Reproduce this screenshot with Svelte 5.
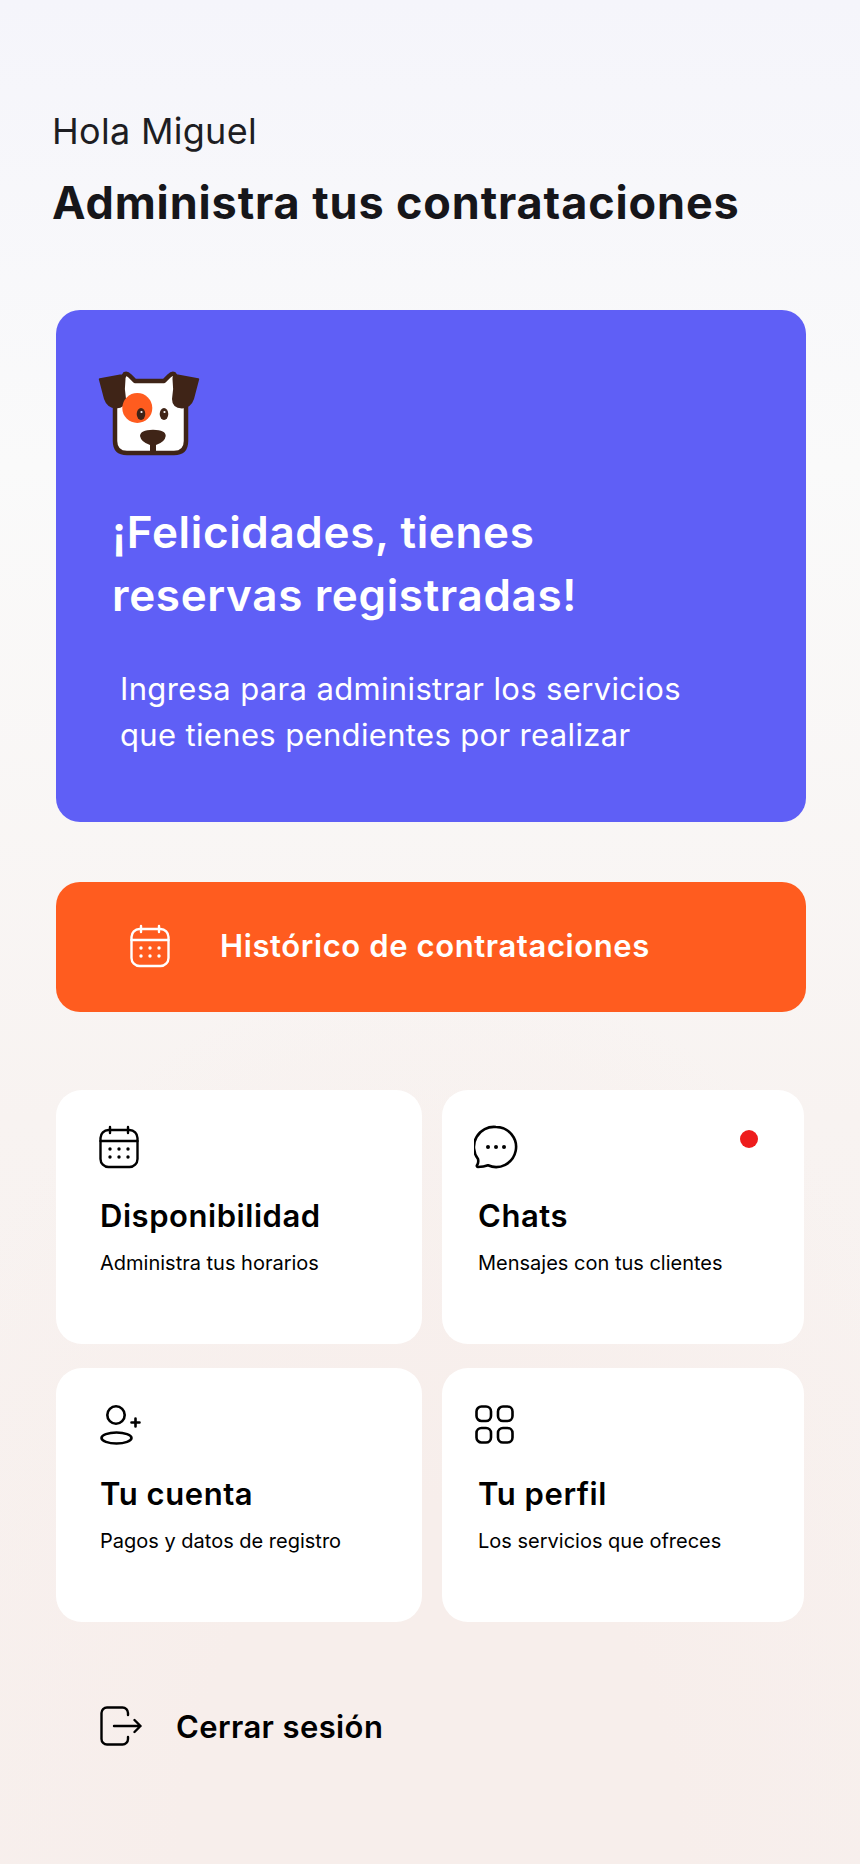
<script>
  const tiles = [
    { title: 'Disponibilidad', text: 'Administra tus horarios', icon: 'calendar' },
    { title: 'Chats', text: 'Mensajes con tus clientes', icon: 'chat', unread: true },
    { title: 'Tu cuenta', text: 'Pagos y datos de registro', icon: 'user' },
    { title: 'Tu perfil', text: 'Los servicios que ofreces', icon: 'grid' }
  ];
</script>

{#snippet calendar()}
  <svg class="calendar" width="40" height="44" viewBox="0 0 40 44" fill="none" stroke="currentColor" stroke-width="2.4" stroke-linecap="round">
    <rect x="1.500" y="5" width="37" height="37" rx="8" />
    <path d="M1.500 16h37M11 2v6M29 2v6" />
    <g fill="currentColor" stroke="none">
      <circle cx="11" cy="24" r="1.700" /><circle cx="20" cy="24" r="1.700" /><circle cx="29" cy="24" r="1.700" />
      <circle cx="11" cy="32" r="1.700" /><circle cx="20" cy="32" r="1.700" /><circle cx="29" cy="32" r="1.700" />
    </g>
  </svg>
{/snippet}

<main class="page">
  <header class="head">
    <p class="hello">Hola Miguel</p>
    <h1>Administra tus contrataciones</h1>
  </header>

  <section class="hero">
    <svg class="dog" width="102" height="85" viewBox="0 0 102 85">
      <path d="M27 3Q29 2 32 5L37 10H66L71 5Q74 2 76 3L88 20V70Q88 82 76 82H29Q17 82 17 70V20Z" fill="#fff" stroke="#3f2417" stroke-width="4.500" stroke-linejoin="round" />
      <path d="M1 9Q0 7 3 7L22 3.500Q28 3 27.500 8Q26 18 28 28Q28 37 18 37.500Q9 37 6 28Z" fill="#3f2417" />
      <path d="M101 9Q102 7 99 7L80 3.500Q74 3 74.500 8Q76 18 74 28Q74 37 84 37.500Q93 37 96 28Z" fill="#3f2417" />
      <circle cx="39.300" cy="37" r="15" fill="#ff5c1f" />
      <ellipse cx="43" cy="43" rx="4.300" ry="6" fill="#3f2417" /><circle cx="43.500" cy="41" r="1.100" fill="#fff" />
      <ellipse cx="66" cy="43" rx="4.300" ry="6" fill="#3f2417" /><circle cx="66.500" cy="41" r="1.100" fill="#fff" />
      <path d="M42 65Q42 59 55 58.700Q68 59 67.700 65Q67 71 58 74V82H52V74Q43 71 42 65Z" fill="#3f2417" />
    </svg>
    <h2>¡Felicidades, tienes<br />reservas registradas!</h2>
    <p>Ingresa para administrar los servicios<br />que tienes pendientes por realizar</p>
  </section>

  <button class="history">
    {@render calendar()}
    <span>Histórico de contrataciones</span>
  </button>

  <section class="tiles">
    {#each tiles as tile}
      <article class="tile">
        <div class="tile-icon">
          {#if tile.icon === 'calendar'}
            {@render calendar()}
          {:else if tile.icon === 'chat'}
            <svg class="shift-chat" width="44" height="44" viewBox="0 0 44 44" fill="none" stroke="currentColor" stroke-width="2.600" stroke-linejoin="round">
              <path d="M22 2a20 20 0 1 1-8 38.300c-3 1.200-7 1.700-10 1.700-1 0-1.500-1-1-1.800 1.500-2 1.500-4 1-6.200A20 20 0 0 1 22 2z" />
              <g fill="currentColor" stroke="none">
                <circle cx="14" cy="22" r="2" /><circle cx="22" cy="22" r="2" /><circle cx="30" cy="22" r="2" />
              </g>
            </svg>
          {:else if tile.icon === 'user'}
            <svg class="shift-user" width="41" height="40" viewBox="0 0 41 40" fill="none" stroke="currentColor" stroke-width="2.600" stroke-linecap="round">
              <circle cx="16" cy="10" r="8.700" />
              <ellipse cx="16.500" cy="33" rx="15" ry="5.500" />
              <path d="M31.500 17.500h8M35.500 13.500v8" />
            </svg>
          {:else}
            <svg class="shift-grid" width="39" height="39" viewBox="0 0 39 39" fill="none" stroke="currentColor" stroke-width="2.600">
              <rect x="1.500" y="1.500" width="14.500" height="14.500" rx="5" />
              <rect x="23" y="1.500" width="14.500" height="14.500" rx="5" />
              <rect x="1.500" y="23" width="14.500" height="14.500" rx="5" />
              <rect x="23" y="23" width="14.500" height="14.500" rx="5" />
            </svg>
          {/if}
          {#if tile.unread}<span class="dot"></span>{/if}
        </div>
        <h3>{tile.title}</h3>
        <p>{tile.text}</p>
      </article>
    {/each}
  </section>

  <button class="logout">
    <svg width="42" height="40" viewBox="0 0 42 40" fill="none" stroke="currentColor" stroke-width="2.400" stroke-linecap="round" stroke-linejoin="round">
      <path d="M28 9V7a5.500 5.500 0 0 0-5.500-5.500H7A5.500 5.500 0 0 0 1.500 7v26A5.500 5.500 0 0 0 7 38.500h15.500A5.500 5.500 0 0 0 28 33v-2" />
      <path d="M14 20h26.500M34.500 14l6 6-6 6" />
    </svg>
    <span>Cerrar sesión</span>
  </button>
</main>

<style>
  :global(body) {
    margin: 0;
  }

  .page {
    box-sizing: border-box;
    width: 860px;
    height: 1864px;
    padding: 109px 54px 0 56px;
    font-family: 'Inter', 'Liberation Sans', sans-serif;
    color: #000;
    background: radial-gradient(ellipse 620px 900px at 50% 100%, #f7eeeb 40%, rgba(247, 238, 235, 0) 100%),
      linear-gradient(180deg, #f5f5fb 0%, #fafafa 25%, #f8f3f1 60%, #f7f0ee 100%);
  }

  .head {
    margin-left: -4px;
  }

  .hello {
    margin: 0;
    font-size: 36px;
    line-height: 44px;
    letter-spacing: 0.3px;
    color: #1d1d22;
  }

  h1 {
    margin: 24px 0 0;
    font-size: 45px;
    line-height: 52px;
    font-weight: 700;
    letter-spacing: 0.87px;
    color: #16161a;
    white-space: nowrap;
  }

  .hero {
    box-sizing: border-box;
    height: 512px;
    margin-top: 81px;
    padding: 61px 43px 0;
    border-radius: 24px;
    background: #5f5ff6;
    color: #fff;
  }

  .dog {
    display: block;
    margin-left: -1px;
  }

  .hero h2 {
    margin: 45px 0 0 13px;
    font-size: 44px;
    line-height: 63px;
    font-weight: 600;
    letter-spacing: 0.65px;
    white-space: nowrap;
  }

  .hero p {
    margin: 39px 0 0 21px;
    font-size: 31px;
    line-height: 46px;
    letter-spacing: 0.35px;
    white-space: nowrap;
  }

  .history {
    display: flex;
    align-items: center;
    width: 750px;
    height: 130px;
    margin-top: 60px;
    padding: 0 0 3px 74px;
    border: 0;
    border-radius: 24px;
    background: #ff5c1f;
    color: #fff;
    font: inherit;
  }

  .history span {
    margin-left: 50px;
    font-size: 31px;
    font-weight: 600;
    letter-spacing: 0.6px;
  }

  .tiles {
    display: grid;
    grid-template-columns: 366px 362px;
    grid-auto-rows: 254px;
    gap: 24px 20px;
    margin-top: 78px;
  }

  .tile {
    padding: 35px 44px 0;
    border-radius: 26px;
    background: #fff;
  }

  .tile:nth-child(even) {
    padding-left: 36px;
  }

  .tile-icon {
    position: relative;
    display: flex;
    align-items: center;
    height: 44px;
  }

  .tile-icon .calendar {
    margin-left: -1px;
  }

  .shift-chat {
    margin-left: -4px;
  }

  .shift-grid {
    margin: -2px 0 0 -3px;
  }

  .shift-user {
    margin-top: -1px;
  }

  .dot {
    position: absolute;
    top: 5px;
    right: 2px;
    width: 18px;
    height: 18px;
    border-radius: 50%;
    background: #ee1c1c;
  }

  h3 {
    margin: 27px 0 0;
    font-size: 31px;
    line-height: 40px;
    font-weight: 600;
    letter-spacing: 0.55px;
  }

  .tile p {
    margin: 15px 0 0;
    font-size: 20px;
    line-height: 24px;
    white-space: nowrap;
  }

  .logout {
    display: flex;
    align-items: center;
    margin: 84px 0 0 44px;
    padding: 0;
    border: 0;
    background: none;
    color: #000;
    font: inherit;
  }

  .logout span {
    margin-left: 34px;
    font-size: 31px;
    font-weight: 600;
    letter-spacing: 0.4px;
  }
</style>
